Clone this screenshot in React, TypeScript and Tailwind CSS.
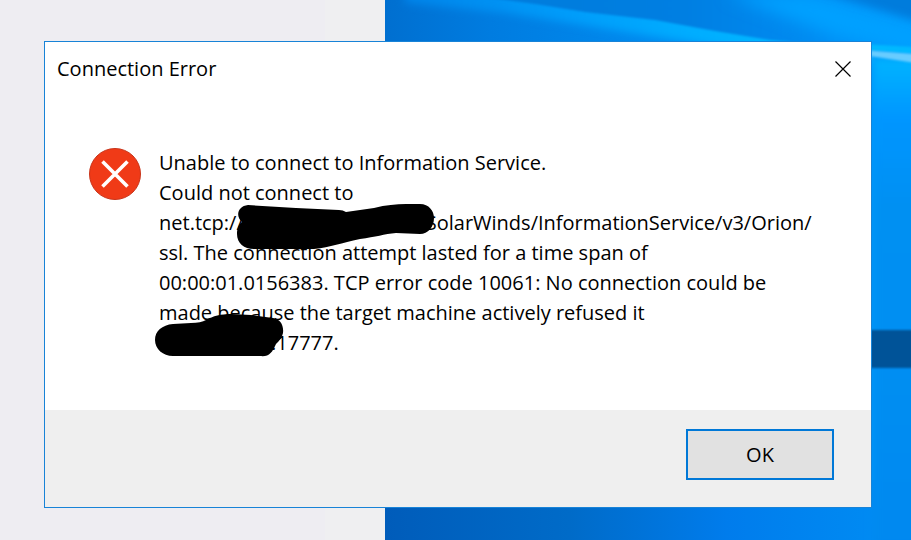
function Wallpaper() {
  return (
    <svg className="h-full min-w-0 flex-1" viewBox="0 0 526 540" preserveAspectRatio="none" aria-hidden="true">
      <defs>
        <linearGradient id="sky" x1="0" y1="0" x2="1" y2="0">
          <stop offset="0" stopColor="#006fd0" />
          <stop offset="0.2" stopColor="#007ce0" />
          <stop offset="0.5" stopColor="#008aee" />
          <stop offset="1" stopColor="#0098fc" />
        </linearGradient>
        <linearGradient id="upper" x1="0" y1="0" x2="1" y2="0">
          <stop offset="0" stopColor="#007cdc" />
          <stop offset="0.45" stopColor="#007fe2" />
          <stop offset="0.75" stopColor="#008cf2" />
          <stop offset="1" stopColor="#009cff" />
        </linearGradient>
        <linearGradient id="beam" x1="0" y1="0" x2="1" y2="0">
          <stop offset="0" stopColor="#0084ea" />
          <stop offset="0.35" stopColor="#009cfa" />
          <stop offset="0.6" stopColor="#00acff" />
          <stop offset="0.85" stopColor="#00b8ff" />
          <stop offset="1" stopColor="#2cc4ff" />
        </linearGradient>
        <linearGradient id="side" x1="0" y1="0" x2="0" y2="1">
          <stop offset="0" stopColor="#00b4ff" />
          <stop offset="0.12" stopColor="#0096ff" />
          <stop offset="0.3" stopColor="#0090f2" />
          <stop offset="0.6" stopColor="#008ff2" />
          <stop offset="1" stopColor="#0088f0" />
        </linearGradient>
        <linearGradient id="floor" x1="0" y1="0" x2="1" y2="0">
          <stop offset="0" stopColor="#005cba" />
          <stop offset="0.35" stopColor="#006bc8" />
          <stop offset="0.65" stopColor="#007cec" />
          <stop offset="1" stopColor="#008ef4" />
        </linearGradient>
        <filter id="soft" x="-20%" y="-50%" width="140%" height="200%">
          <feGaussianBlur stdDeviation="4" />
        </filter>
        <filter id="glow" x="-20%" y="-50%" width="140%" height="200%">
          <feGaussianBlur stdDeviation="8" />
        </filter>
        <filter id="edge" x="-10%" y="-20%" width="120%" height="140%">
          <feGaussianBlur stdDeviation="1" />
        </filter>
      </defs>
      <rect width="526" height="540" fill="url(#sky)" />
      <path d="M20 -10 H110 L485 20 V64 L380 54 L260 35 L120 13 L20 3Z" fill="url(#beam)" filter="url(#soft)" />
      <path d="M105 -2 L150 4 L200 12 L270 20 L330 31 L385 40 L480 49 L540 54 V-10 H105Z" fill="url(#upper)" filter="url(#edge)" />
      <path d="M340 -6 L430 -6 L560 34 V60 L450 36 Z" fill="#00a0ff" filter="url(#glow)" />
      <path d="M400 -20 H560 V30 Z" fill="#007cdc" filter="url(#soft)" />
      <rect y="480" width="526" height="60" fill="url(#floor)" />
      <rect x="488" y="58" width="60" height="500" fill="url(#side)" filter="url(#soft)" />
      <path d="M478 44 L530 47 V54 L478 50Z" fill="#00b8ff" filter="url(#edge)" />
      <path d="M478 50 L530 54 V63 L478 55Z" fill="#68ccff" filter="url(#edge)" />
      <rect x="470" y="330" width="70" height="38" fill="#005398" filter="url(#edge)" />
    </svg>
  )
}

function ErrorIcon() {
  return (
    <svg className="size-[52px] shrink-0" viewBox="0 0 52 52" role="img" aria-label="Error">
      <circle cx="26" cy="26" r="25.5" fill="#f03a17" stroke="#c8351b" />
      <path d="M13.5 13.5 38.5 38.5M38.5 13.5 13.5 38.5" stroke="#fff" strokeWidth="3.6" />
    </svg>
  )
}

function HostScribble() {
  return (
    <svg className="absolute -top-1 -left-2 h-[46px] w-[200px]" viewBox="0 0 200 46" aria-hidden="true">
      <path d="M12 1 L60 4 L103 6 Q107 6 110 8 L138 4 C150 1 160 0 170 0 L184 0 C193 0 198 7 198 14 C198 23 192 30 184 30 L160 29 C148 30 140 33 124 35 C105 39 95 43 78 45 L18 45 C8 45 1 39 1 30 C1 24 3 20 6 18 C-1 12 2 2 12 1Z" />
    </svg>
  )
}

function AddressScribble() {
  return (
    <svg className="absolute -top-[14px] -left-1 h-[44px] w-[130px]" viewBox="0 0 130 44" aria-hidden="true">
      <path d="M18 10 L36 9 Q46 9 51 6 C58 2 66 0 76 0 L96 1 L118 4 C125 5 129 11 128 19 C127 24 124 27 121 30 C117 39 114 43 105 42 L18 42 C8 42 0 35 0 26 C0 17 7 11 18 10Z" />
    </svg>
  )
}

export default function App() {
  return (
    <main className="relative min-h-screen overflow-hidden pt-[41px] pr-[39px] pb-8 pl-[44px] font-['Open_Sans','Noto_Sans',sans-serif] text-xl text-black">
      <div className="absolute inset-0 flex">
        <div className="w-[325px] bg-[#eeedf2]" />
        <div className="w-[60px] bg-[#efeff1]" />
        <Wallpaper />
      </div>

      <section
        role="dialog"
        aria-labelledby="title"
        aria-describedby="message"
        className="relative border border-[#1883d7] bg-white"
      >
        <header className="flex items-center justify-between pt-3 pr-5 pl-3">
          <h1 id="title" className="leading-[30px]">Connection Error</h1>
          <button type="button" aria-label="Close" className="flex size-4">
            <svg className="size-4" viewBox="0 0 16 16" fill="none" stroke="#000" strokeWidth="1.2">
              <path d="M.5 .5 15.5 15.5M15.5 .5 .5 15.5" />
            </svg>
          </button>
        </header>

        <div className="flex gap-[18px] px-11 pt-16 pb-[52px]">
          <ErrorIcon />
          <p id="message" className="leading-[30px] whitespace-nowrap">
            Unable to connect to Information Service.
            <br />
            Could not connect to
            <br />
            net.tcp://
            <span className="relative inline-block h-[30px] w-[182px] align-top">
              <HostScribble />
            </span>
            SolarWinds/InformationService/v3/Orion/
            <br />
            ssl. The connection attempt lasted for a time span of
            <br />
            00:00:01.0156383. TCP error code 10061: No connection could be
            <br />
            made because the target machine actively refused it
            <br />
            <span className="relative inline-block h-[30px] w-28 align-top">
              <AddressScribble />
            </span>
            :17777.
          </p>
        </div>

        <footer className="flex justify-end bg-[#efefef] px-[37px] pt-[19px] pb-[27px]">
          <button type="button" className="h-[51px] w-[148px] border-2 border-[#0078d7] bg-[#e1e1e1]">
            OK
          </button>
        </footer>
      </section>
    </main>
  )
}
